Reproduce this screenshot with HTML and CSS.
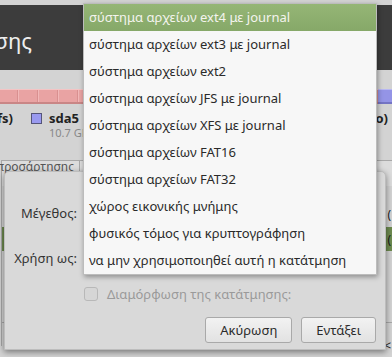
FILE: index.html
```html
<!DOCTYPE html>
<html>
  <head>
    <meta charset="utf-8">
    <title>Τύπος εγκατάστασης</title>
    <link rel="stylesheet" href="styles.css">
  </head>
  <body>
    <div class="window">
      <div class="header">
        <div class="clip-right title-box"><span class="title">Τύπος εγκατάστασης</span></div>
      </div>
      <div class="partbar">
        <div class="part-pink"></div>
        <div class="part-blue"></div>
      </div>
      <div class="legend">
        <div class="clip-right legend-left"><b>sda1 (ntfs)</b></div>
        <div class="legend-item">
          <span class="swatch"></span>
          <div>
            <b class="name">sda5</b>
            <div class="size">10.7 GB</div>
          </div>
        </div>
        <div class="clip-right legend-right"><b>(ελεύθερο)</b></div>
      </div>
      <div class="table">
        <div class="thead">
          <div class="clip-right th-first"><span>Σημείο προσάρτησης</span></div>
          <div class="th"></div>
        </div>
        <div class="row first"><span class="cell-end">(</span></div>
        <div class="row selected"><span class="cell-end">(</span></div>
        <div class="row last"><span class="cell-end">&lt;</span></div>
      </div>
    </div>

    <div class="dialog">
      <div class="form-row">
        <label>Μέγεθος:</label>
      </div>
      <div class="form-row">
        <label>Χρήση ως:</label>
      </div>
      <div class="form-row check-row">
        <span class="checkbox"></span>
        <span class="check-label">Διαμόρφωση της κατάτμησης:</span>
      </div>
      <div class="buttons">
        <button class="btn">Ακύρωση</button>
        <button class="btn">Εντάξει</button>
      </div>
    </div>

    <ul class="menu">
      <li class="active">σύστημα αρχείων ext4 με journal</li>
      <li>σύστημα αρχείων ext3 με journal</li>
      <li>σύστημα αρχείων ext2</li>
      <li>σύστημα αρχείων JFS με journal</li>
      <li>σύστημα αρχείων XFS με journal</li>
      <li>σύστημα αρχείων FAT16</li>
      <li>σύστημα αρχείων FAT32</li>
      <li>χώρος εικονικής μνήμης</li>
      <li>φυσικός τόμος για κρυπτογράφηση</li>
      <li>να μην χρησιμοποιηθεί αυτή η κατάτμηση</li>
    </ul>
  </body>
</html>
```

FILE: styles.css
```css
* {
  font-family: "Noto Sans", "DejaVu Sans", sans-serif;
  box-sizing: border-box;
}

body {
  margin: 0;
  background: #d3d3d3;
  color: #333;
  font-size: 13px;
  overflow: hidden;
}

.window {
  width: 392px;
  height: 357px;
  padding-top: 5px;
  background: #d3d3d3;
  overflow: hidden;
}

/* clipped text that ends at the box's right edge */
.clip-right {
  display: flex;
  justify-content: flex-end;
  white-space: nowrap;
}

.header {
  height: 65px;
  background: #3c3c3c;
  padding-top: 21px;
}

.title-box {
  width: 32px;
}

.title {
  color: #eeeeee;
  font-size: 22px;
  line-height: 28px;
}

.partbar {
  display: flex;
  margin-top: 19px;
  height: 15px;
}

.part-pink {
  flex: 1;
  background-color: #e9a3a3;
  background-image: repeating-linear-gradient(to right, transparent 0, transparent 17px, #d99090 17px, #d99090 18px, #f2b8b8 18px, #f2b8b8 19px, transparent 19px, transparent 20px);
  border-top: 1px solid #f4c4c4;
  border-bottom: 2px solid #c98686;
}

.part-blue {
  width: 14px;
  background: #9494e6;
  border-top: 1px solid #b8b8f2;
  border-bottom: 2px solid #7474c4;
}

.legend {
  display: flex;
  align-items: flex-start;
  height: 56px;
  padding-top: 6px;
  font-size: 13px;
  color: #222;
  line-height: 17px;
}

.legend-left {
  width: 13px;
}

.legend-item {
  display: flex;
  margin-left: 18px;
  gap: 7px;
}

.swatch {
  width: 11px;
  height: 11px;
  margin-top: 3px;
  background: #9a9af0;
  border: 1px solid #55557a;
}

.name {
  display: block;
  line-height: 17px;
}

.size {
  color: #888;
  font-size: 11px;
  line-height: 12px;
}

.legend-right {
  width: 20px;
  margin-left: auto;
  margin-right: 4px;
}

.table {
  margin-left: 1px;
  border-top: 1px solid #a8a8a8;
  border-left: 1px solid #a8a8a8;
}

.thead {
  display: flex;
  height: 25px;
  background: #dcdcdc;
  font-size: 12px;
  line-height: 11px;
  color: #555;
}

.th-first {
  width: 78px;
  padding-top: 0;
  padding-right: 5px;
  border-right: 1px solid #a8a8a8;
}

.th {
  flex: 1;
}

.row {
  height: 24px;
  display: flex;
  justify-content: flex-end;
  align-items: center;
  font-size: 12px;
  padding-right: 1px;
  color: #222;
}

.row.first {
  height: 41px;
  align-items: flex-start;
  padding-top: 20px;
}

.row.selected {
  background: #6d8a4f;
  color: #1a1a1a;
}

.row.last {
  margin-top: 71px;
  border-top: 1px solid #a8a8a8;
  align-items: flex-start;
  padding-top: 14px;
}

.dialog {
  position: absolute;
  left: 4px;
  top: 171px;
  width: 382px;
  height: 179px;
  background: #d9d9d9;
  border: 1px solid #bdbdbd;
  border-radius: 5px 5px 0 0;
  box-shadow: 0 2px 6px rgba(0, 0, 0, 0.45);
  padding-top: 28px;
}

.form-row {
  display: flex;
  align-items: center;
  height: 26px;
  margin-bottom: 19px;
}

.form-row label {
  width: 72px;
  text-align: right;
  color: #333;
}

.check-row {
  margin-top: -9px;
  margin-bottom: 0;
  padding-left: 79px;
  gap: 9px;
}

.checkbox {
  width: 14px;
  height: 14px;
  border: 1px solid #b8b8b8;
  border-radius: 3px;
  background: #d6d6d6;
}

.check-label {
  color: #9a9a9a;
}

.buttons {
  display: flex;
  justify-content: flex-end;
  gap: 9px;
  padding-right: 9px;
  margin-top: 10px;
}

.btn {
  height: 26px;
  padding: 0 14px;
  font-size: 13px;
  color: #2a2a2a;
  background: linear-gradient(#f2f2f2, #e2e2e2);
  border: 1px solid #a9a9a9;
  border-radius: 3px;
}

.menu {
  position: absolute;
  left: 83px;
  top: 3px;
  width: 294px;
  margin: 0;
  padding: 0;
  list-style: none;
  background: #f7f7f7;
  border: 1px solid #bcbcbc;
  box-shadow: 1px 2px 5px rgba(0, 0, 0, 0.35);
}

.menu li {
  height: 27px;
  line-height: 27px;
  padding-left: 5px;
  color: #2a2a2a;
  white-space: nowrap;
}

.menu li.active {
  background: linear-gradient(#95b676, #86a868);
  color: #f4f4ee;
}
```
